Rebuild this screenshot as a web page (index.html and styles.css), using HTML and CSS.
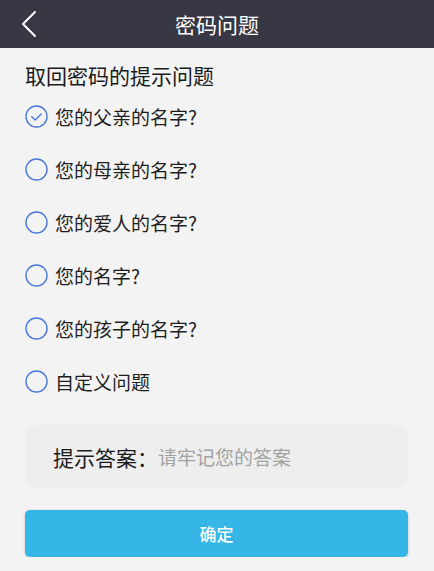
FILE: index.html
```
<!DOCTYPE html>
<html lang="zh-CN">
<head>
<meta charset="utf-8">
<title>密码问题</title>
<link rel="stylesheet" href="styles.css">
</head>
<body>
<header class="topbar">
  <div class="back">
    <svg width="16" height="28" viewBox="0 0 16 28"><path d="M14 2 L2 14 L14 26" fill="none" stroke="#ffffff" stroke-width="2" stroke-linecap="round" stroke-linejoin="round"/></svg>
  </div>
  <h1 class="title">密码问题</h1>
  <div class="spacer"></div>
</header>
<main class="content">
  <h2 class="section-title">取回密码的提示问题</h2>
  <ul class="options">
    <li class="option checked">
      <svg class="radio" width="23" height="23" viewBox="0 0 24 24"><circle cx="12" cy="12" r="11" fill="none" stroke="#4a78dc" stroke-width="1.4"/><path d="M7 12.2 L10.6 15.6 L17 9.4" fill="none" stroke="#4a78dc" stroke-width="1.4" stroke-linecap="round" stroke-linejoin="round"/></svg>
      <span>您的父亲的名字?</span>
    </li>
    <li class="option">
      <svg class="radio" width="23" height="23" viewBox="0 0 24 24"><circle cx="12" cy="12" r="11" fill="none" stroke="#4a78dc" stroke-width="1.4"/></svg>
      <span>您的母亲的名字?</span>
    </li>
    <li class="option">
      <svg class="radio" width="23" height="23" viewBox="0 0 24 24"><circle cx="12" cy="12" r="11" fill="none" stroke="#4a78dc" stroke-width="1.4"/></svg>
      <span>您的爱人的名字?</span>
    </li>
    <li class="option">
      <svg class="radio" width="23" height="23" viewBox="0 0 24 24"><circle cx="12" cy="12" r="11" fill="none" stroke="#4a78dc" stroke-width="1.4"/></svg>
      <span>您的名字?</span>
    </li>
    <li class="option">
      <svg class="radio" width="23" height="23" viewBox="0 0 24 24"><circle cx="12" cy="12" r="11" fill="none" stroke="#4a78dc" stroke-width="1.4"/></svg>
      <span>您的孩子的名字?</span>
    </li>
    <li class="option">
      <svg class="radio" width="23" height="23" viewBox="0 0 24 24"><circle cx="12" cy="12" r="11" fill="none" stroke="#4a78dc" stroke-width="1.4"/></svg>
      <span>自定义问题</span>
    </li>
  </ul>
  <div class="answer">
    <span class="answer-label">提示答案：</span>
    <span class="answer-placeholder">请牢记您的答案</span>
  </div>
  <button class="confirm">确定</button>
</main>
</body>
</html>
```
FILE: styles.css
```
* { box-sizing: border-box; }
html, body {
  margin: 0;
  padding: 0;
  background: #f3f3f3;
  font-family: "Noto Sans CJK SC", "Noto Sans", sans-serif;
}
.topbar {
  height: 48px;
  background: #383744;
  display: grid;
  grid-template-columns: 1fr auto 1fr;
  align-items: center;
}
.back {
  padding-left: 21px;
  display: flex;
  align-items: center;
}
.back svg { display: block; }
.title {
  margin: 0;
  color: #ffffff;
  font-size: 21px;
  font-weight: 400;
  line-height: 48px;
}
.content {
  padding: 0 26px 0 25px;
}
.section-title {
  margin: 12px 0 0;
  font-size: 21px;
  font-weight: 400;
  line-height: 30px;
  color: #1b1b1b;
}
.options {
  list-style: none;
  margin: 0;
  padding: 0;
}
.option {
  height: 53px;
  display: flex;
  align-items: center;
  gap: 7px;
  font-size: 19px;
  color: #1e1e1e;
}
.radio { display: block; flex: none; }
.answer {
  margin-top: 17px;
  height: 63px;
  border-radius: 12px;
  background: #eeeeee;
  display: flex;
  align-items: center;
  padding-left: 28px;
}
.answer-label {
  font-size: 21px;
  color: #1a1a1a;
}
.answer-placeholder {
  font-size: 19px;
  color: #a2a2a2;
}
.confirm {
  display: block;
  width: 100%;
  margin-top: 22px;
  height: 47px;
  border: none;
  border-radius: 5px;
  background: #36b5e7;
  color: #ffffff;
  font-family: "Noto Sans CJK SC", "Noto Sans", sans-serif;
  font-size: 17px;
  font-weight: 500;
  box-shadow: 0 1px 3px rgba(0,0,0,0.2);
}
```
